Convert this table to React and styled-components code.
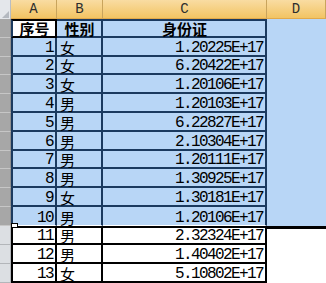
import React from 'react'
import styled, { createGlobalStyle } from 'styled-components'

const GlobalStyle = createGlobalStyle`
  body {
    margin: 0;
    background: #ffffff;
  }
`

const COLS = '11px 46px 46px 164px 59px'
const NAVY = '#1b3a5f'
const BLUE = '#b8d6f6'

const rows = [
  { h: 19, no: '1', sex: '女', id: '1.20225E+17', sel: true },
  { h: 18, no: '2', sex: '女', id: '6.20422E+17', sel: true },
  { h: 19, no: '3', sex: '女', id: '1.20106E+17', sel: true },
  { h: 19, no: '4', sex: '男', id: '1.20103E+17', sel: true },
  { h: 19, no: '5', sex: '男', id: '6.22827E+17', sel: true },
  { h: 19, no: '6', sex: '男', id: '2.10304E+17', sel: true },
  { h: 18, no: '7', sex: '男', id: '1.20111E+17', sel: true },
  { h: 19, no: '8', sex: '男', id: '1.30925E+17', sel: true },
  { h: 19, no: '9', sex: '女', id: '1.30181E+17', sel: true },
  { h: 19, no: '10', sex: '男', id: '1.20106E+17', sel: true, last: true },
  { h: 19, no: '11', sex: '男', id: '2.32324E+17', first: true },
  { h: 19, no: '12', sex: '男', id: '1.40402E+17' },
  { h: 19, no: '13', sex: '女', id: '5.10802E+17' },
]

const Sheet = styled.div`
  position: relative;
  width: 326px;
  height: 283px;
  overflow: hidden;
  display: flex;
  flex-direction: column;
`

const HeadRow = styled.div`
  display: grid;
  grid-template-columns: ${COLS};
  height: 19px;
  flex: none;
`

const Corner = styled.div`
  background: #e4e7eb;
  border-right: 1px solid #b9bdc3;
  display: flex;
  align-items: flex-end;
  justify-content: flex-end;
  svg {
    display: block;
  }
`

const ColHead = styled.div`
  background: linear-gradient(#f9dca2, #f2c463);
  border-right: 1px solid #c9a45c;
  border-bottom: 1px solid #e2a94a;
  display: flex;
  align-items: center;
  justify-content: center;
  font-family: "Liberation Mono", monospace;
  font-size: 14px;
  color: #2e2e2e;
`

const Row = styled.div`
  display: grid;
  grid-template-columns: ${COLS};
  height: ${p => p.$h}px;
  flex: none;
`

const RowHead = styled.div`
  box-sizing: border-box;
  background: ${p => (p.$sel ? '#a7a7a7' : '#dcdfe3')};
  border-bottom: 1px solid ${p => (p.$sel ? '#c6c6c6' : '#b3b6ba')};
  border-right: 1px solid ${p => (p.$sel ? '#8f8f8f' : '#b3b6ba')};
`

const Cell = styled.div`
  box-sizing: border-box;
  display: flex;
  align-items: flex-end;
  justify-content: ${p => (p.$align === 'right' ? 'flex-end' : p.$align === 'center' ? 'center' : 'flex-start')};
  padding: 0 2px 0 3px;
  white-space: nowrap;
  background: ${p => (p.$tone === 'sel' ? BLUE : '#ffffff')};
  border-bottom: ${p => (p.$last ? '1px solid #ffffff' : `2px solid ${p.$tone === 'sel' ? NAVY : '#000'}`)};
  border-top: ${p => (p.$top ? `2px solid ${p.$topColor || '#000'}` : 'none')};
  border-left: ${p => (p.$lead ? `2px solid ${p.$tone === 'plain' ? '#000' : NAVY}` : 'none')};
  border-right: 2px solid ${p => (p.$tone === 'sel' ? NAVY : '#000')};
  font-family: "Noto Sans CJK SC", sans-serif;
  font-size: 15px;
  font-weight: ${p => (p.$bold ? 700 : 400)};
  line-height: 15px;
  color: #000;
`

const Num = styled.span`
  font-family: "Liberation Mono", monospace;
  font-size: 16px;
  letter-spacing: -1.6px;
  line-height: 14px;
`

const Spare = styled.div`
  box-sizing: border-box;
  background: ${p => (p.$sel ? BLUE : '#ffffff')};
  border-top: ${p => (p.$top ? '3px solid #000' : 'none')};
`

const FillHandle = styled.div`
  position: absolute;
  left: 11px;
  top: 223px;
  width: 5px;
  height: 3px;
  background: #ffffff;
  border: 1px solid #000;
`

export default function App() {
  return (
    <>
      <GlobalStyle />
      <Sheet>
        <HeadRow>
          <Corner>
            <svg width="9" height="9" viewBox="0 0 9 9">
              <polygon points="8,1 8,8 1,8" fill="#b4b9c0" />
            </svg>
          </Corner>
          <ColHead>A</ColHead>
          <ColHead>B</ColHead>
          <ColHead>C</ColHead>
          <ColHead>D</ColHead>
        </HeadRow>

        <Row $h={19}>
          <RowHead $sel />
          <Cell $tone="active" $lead $top $align="center" $bold>序号</Cell>
          <Cell $tone="sel" $top $topColor={NAVY} $align="center" $bold>性别</Cell>
          <Cell $tone="sel" $top $topColor={NAVY} $align="center" $bold>身份证</Cell>
          <Spare $sel />
        </Row>

        {rows.map(r => {
          const tone = r.sel ? 'sel' : 'plain'
          return (
            <Row key={r.no} $h={r.h}>
              <RowHead $sel={r.sel} />
              <Cell $tone={tone} $lead $top={r.first} $last={r.last} $align="right">
                <Num>{r.no}</Num>
              </Cell>
              <Cell $tone={tone} $top={r.first} $last={r.last}>{r.sex}</Cell>
              <Cell $tone={tone} $top={r.first} $last={r.last} $align="right">
                <Num>{r.id}</Num>
              </Cell>
              <Spare $sel={r.sel} $top={r.first} />
            </Row>
          )
        })}
        <FillHandle />
      </Sheet>
    </>
  )
}
